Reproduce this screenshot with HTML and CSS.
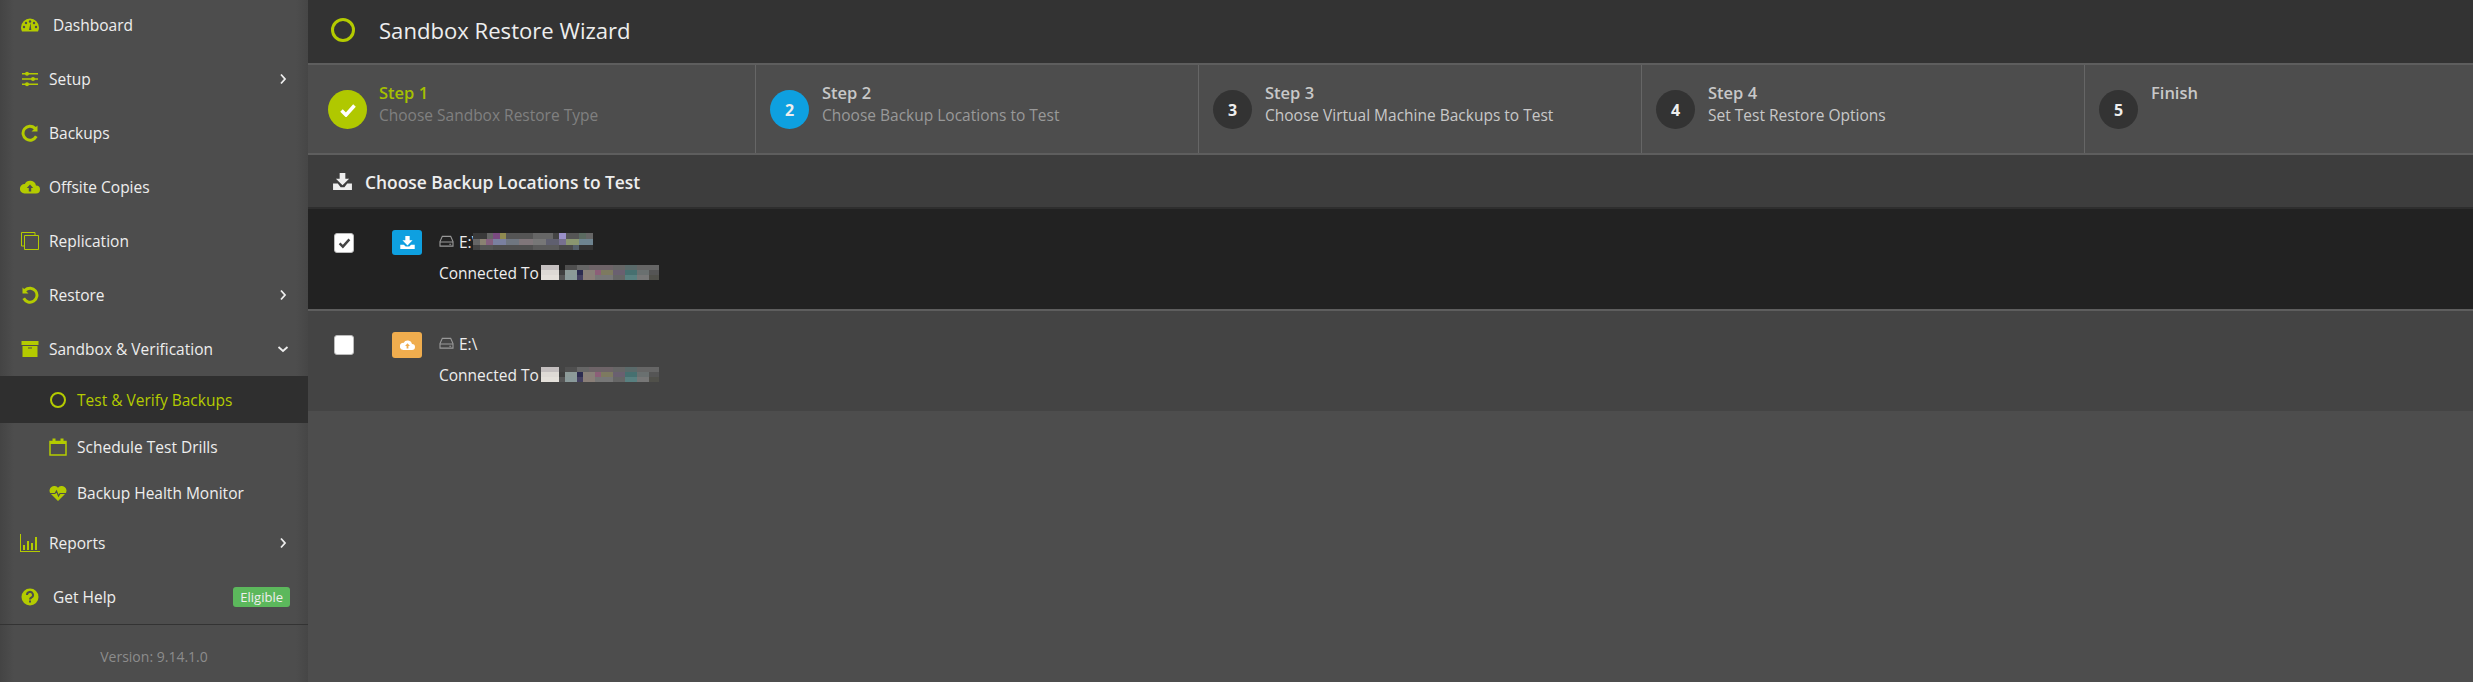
FILE: index.html
```html
<!DOCTYPE html>
<html lang="en">
<head>
<meta charset="utf-8">
<title>Sandbox Restore Wizard</title>
<link rel="stylesheet" href="styles.css">
</head>
<body>
<div class="app">
  <aside class="sidebar">
    <nav class="nav">
      <a class="item first wide"><svg class="ico" viewBox="0 0 18 18"><path d="M9 2.500A9 9 0 0 0 0 11.500c0 1.500.4 2.800 1 4h16c.6-1.200 1-2.500 1-4a9 9 0 0 0-9-9z"/><g fill="#4d4d4d"><circle cx="3" cy="11" r="1.200"/><circle cx="5" cy="7" r="1.200"/><circle cx="9" cy="5.500" r="1.200"/><circle cx="13" cy="7" r="1.200"/><circle cx="15" cy="11" r="1.200"/><path d="M8 14l1.500-7 .8 7z"/></g></svg><span>Dashboard</span></a>
      <a class="item"><svg class="ico" viewBox="0 0 18 18"><path d="M1 3h16v1.400H1zM1 8.300h16v1.400H1zM1 13.600h16V15H1z"/><circle cx="6" cy="3.700" r="2"/><circle cx="12" cy="9" r="2"/><circle cx="6" cy="14.300" r="2"/></svg><span>Setup</span><svg class="chev" viewBox="0 0 8 12"><path d="M2 1.500L6 6l-4 4.500"/></svg></a>
      <a class="item"><svg class="ico" viewBox="0 0 18 18"><path d="M16.500 1.500v6h-6l2.300-2.300A5.500 5.500 0 1 0 14 11.500l2.600 1.600A8.500 8.500 0 1 1 14.900 3z"/></svg><span>Backups</span></a>
      <a class="item"><svg class="ico big" viewBox="0 0 20 18"><path d="M16 7.500A6 6 0 0 0 4.800 6 4.700 4.700 0 0 0 4.500 15.500H16a4 4 0 0 0 0-8z"/><path fill="#4d4d4d" d="M10 6.500l3.200 3.500h-2v3.500H8.800V10h-2z"/></svg><span>Offsite Copies</span></a>
      <a class="item"><svg class="ico" viewBox="0 0 18 18"><g fill="none" stroke="#b4cb00"><path d="M3.500 14H.5V.5H14v3"/><path d="M3.500 3.500h14v14h-14z"/></g></svg><span>Replication</span></a>
      <a class="item"><svg class="ico" viewBox="0 0 18 18"><path transform="matrix(-1 0 0 1 18 0)" d="M16.500 1.500v6h-6l2.300-2.300A5.500 5.500 0 1 0 14 11.500l2.600 1.600A8.500 8.500 0 1 1 14.900 3z"/></svg><span>Restore</span><svg class="chev" viewBox="0 0 8 12"><path d="M2 1.500L6 6l-4 4.500"/></svg></a>
      <a class="item"><svg class="ico" viewBox="0 0 18 18"><path d="M.5 1h17v4H.5zM1.500 6h15v11h-15z"/><path fill="#4d4d4d" d="M7 7.500h4v1H7z"/></svg><span>Sandbox &amp; Verification</span><svg class="chev down" viewBox="0 0 12 8"><path d="M1.500 2L6 6l4.500-4"/></svg></a>
      <a class="sub active"><span class="ring-s"></span><span>Test &amp; Verify Backups</span></a>
      <a class="sub"><svg class="ico" viewBox="0 0 18 18"><path fill="none" stroke="#b4cb00" stroke-width="1.500" d="M1 3.500h16v13.500H1z"/><path d="M1 3h16v3H1zM3.500.5h3v3.500h-3zM11.500.5h3v3.500h-3z"/></svg><span>Schedule Test Drills</span></a>
      <a class="sub short"><svg class="ico" viewBox="0 0 18 18"><path d="M9 17L1.500 9.500A4.700 4.700 0 0 1 9 3.800a4.700 4.700 0 0 1 7.500 5.700z"/><path fill="none" stroke="#4d4d4d" stroke-width="1.200" d="M0 9.500h6l1.500-2.500 2 5 1.500-2.500h7"/></svg><span>Backup Health Monitor</span></a>
      <a class="item"><svg class="ico big" viewBox="0 0 20 18"><path d="M0 0h1v17h19v1H0zM3 11h2v5H3zM7 7h2v9H7zM11 9h2v7h-2zM15 3h2v13h-2z"/></svg><span>Reports</span><svg class="chev" viewBox="0 0 8 12"><path d="M2 1.500L6 6l-4 4.500"/></svg></a>
      <a class="item wide"><svg class="ico" viewBox="0 0 18 18"><circle cx="9" cy="9" r="8.500"/><path fill="none" stroke="#4d4d4d" stroke-width="2" d="M6 7a3 3 0 1 1 4.500 2.500C9.500 10 9 10.500 9 11.500"/><path fill="#4d4d4d" d="M8 12.500h2v2H8z"/></svg><span>Get Help</span><em class="pill">Eligible</em></a>
    </nav>
    <footer class="version">Version: 9.14.1.0</footer>
  </aside>
  <main class="main">
    <header class="head"><span class="ring"></span><h1>Sandbox Restore Wizard</h1></header>
    <ol class="steps">
      <li class="step done"><span class="num"><svg class="tick" viewBox="0 0 16 14"><path d="M1.500 7.500L6 12 14.500 2.500"/></svg></span><div><b>Step 1</b><small>Choose Sandbox Restore Type</small></div></li>
      <li class="step now"><span class="num">2</span><div><b>Step 2</b><small>Choose Backup Locations to Test</small></div></li>
      <li class="step"><span class="num">3</span><div><b>Step 3</b><small>Choose Virtual Machine Backups to Test</small></div></li>
      <li class="step"><span class="num">4</span><div><b>Step 4</b><small>Set Test Restore Options</small></div></li>
      <li class="step"><span class="num">5</span><div><b>Finish</b></div></li>
    </ol>
    <h2 class="section"><svg class="sec-ico" viewBox="0 0 20 18"><path d="M7 0h6v6h4l-7 7-7-7h4z"/><path d="M0 11h5l3 4h4l3-4h5v7H0z"/></svg>Choose Backup Locations to Test</h2>
    <section class="row on">
      <span class="check"><svg viewBox="0 0 16 14"><path d="M2 7.500L6 11.500 14 2.500"/></svg></span>
      <span class="badge blue"><svg viewBox="0 0 20 18"><path d="M7 0h6v6h4l-7 7-7-7h4z"/><path d="M0 12h5l2.500 2.500h5L15 12h5v6H0z"/></svg></span>
      <div class="info">
        <p class="path"><svg class="drive" viewBox="0 0 16 14"><path d="M3.500 1.500h9L15 7v5H1V7z"/><path d="M1 7.500h14M11 10h2"/></svg>E:\<span class="mosaic m-path"></span></p>
        <p class="conn">Connected To<span class="mosaic m-host"></span></p>
      </div>
    </section>
    <section class="row off">
      <span class="check"></span>
      <span class="badge orange"><svg viewBox="0 0 20 16"><path d="M16 6A6 6 0 0 0 4.800 4.500 4.700 4.700 0 0 0 4.500 14H16a4 4 0 0 0 0-8z"/><path fill="#f0ad4e" d="M10 5l3.200 3.500h-2V12H8.800V8.500h-2z"/></svg></span>
      <div class="info">
        <p class="path"><svg class="drive" viewBox="0 0 16 14"><path d="M3.500 1.500h9L15 7v5H1V7z"/><path d="M1 7.500h14M11 10h2"/></svg>E:\</p>
        <p class="conn">Connected To<span class="mosaic m-host"></span></p>
      </div>
    </section>
  </main>
</div>
</body>
</html>
```
FILE: styles.css
```css
* { box-sizing: border-box; }
html, body { margin: 0; height: 100%; overflow: hidden; }
body { font-family: "Open Sans", "Noto Sans", sans-serif; background: #4d4d4d; color: #eee; }
.app { display: flex; height: 682px; }

.sidebar {
  width: 308px; flex: none; display: flex; flex-direction: column;
  background: linear-gradient(90deg, #444 0, #4d4d4d 14px, #4d4d4d 296px, #464646 308px);
}
.nav { display: flex; flex-direction: column; height: 625px; border-bottom: 1px solid #333; }
.item, .sub { display: flex; align-items: center; font-size: 15.5px; color: #eee; }
.item { height: 54px; padding: 0 21px; gap: 10px; }
.item.first { height: 52px; padding-bottom: 2px; }
.item.wide { gap: 14px; }
.sub { height: 47px; padding-left: 49px; gap: 10px; }
.sub.short { height: 46px; }
.active { background: #2f2f2f; color: #b4cb00; }
.ico { width: 18px; height: 18px; flex: none; fill: #b4cb00; }
.ico.big { width: 20px; margin-left: -1px; margin-right: -1px; }
.chev { width: 8px; height: 12px; margin-left: auto; margin-right: 0; fill: none; stroke: #eee; stroke-width: 1.800; }
.chev.down { width: 12px; height: 8px; margin-right: -2px; }
.ring-s { width: 16px; height: 16px; margin: 0 1px; border: 2.500px solid #b4cb00; border-radius: 50%; flex: none; }
.pill { margin-left: auto; margin-right: -3px; height: 20px; padding: 0 7px; background: #5cb85c; border-radius: 3px; color: #eee; font-size: 13px; font-style: normal; line-height: 20px; }
.version { padding-top: 22px; text-align: center; font-size: 14px; color: #8c8c8c; }

.main { flex: 1; min-width: 0; }
.head { height: 65px; display: flex; align-items: center; padding-left: 23px; gap: 24px; background: #333; border-bottom: 2px solid #5e5e5e; }
.ring { width: 24px; height: 24px; border: 3px solid #b4cb00; border-radius: 50%; margin-top: -4px; }
.head h1 { margin: -4px 0 0; font-size: 22.100px; font-weight: 400; color: #eee; }

.steps { display: grid; grid-template-columns: 448px 443px 443px 443px 1fr; height: 90px; margin: 0; padding: 0; list-style: none; background: #4d4d4d; border-bottom: 2px solid #5e5e5e; }
.step { display: flex; align-items: flex-start; gap: 13px; padding: 25px 14px 0; border-right: 1px solid #666; color: #c8c8c8; }
.step:first-child { padding-left: 20px; gap: 12px; }
.step:last-child { border-right: 0; }
.num { width: 39px; height: 39px; flex: none; display: flex; align-items: center; justify-content: center; border-radius: 50%; background: #333; color: #eee; font-size: 16px; font-weight: 700; }
.step b { display: block; margin-top: -8px; font-size: 16.500px; font-weight: 600; line-height: 22px; }
.step small { display: block; font-size: 15.500px; line-height: 22px; }
.done b { color: #a6c000; }
.done small { color: #808080; }
.done .num { background: #b0c800; }
.now small { color: #999; }
.now .num { background: #0ea0e0; }
.tick { width: 16px; height: 14px; fill: none; stroke: #fff; stroke-width: 3.500; }

.section { display: flex; align-items: center; gap: 13px; height: 54px; margin: 0; padding: 1px 0 0 25px; background: #3d3d3d; border-bottom: 2px solid #2e2e2e; font-size: 17.400px; font-weight: 600; color: #eee; }
.sec-ico { width: 19px; height: 17px; fill: #eee; }

.row { display: flex; align-items: flex-start; height: 102px; border-bottom: 2px solid #5e5e5e; padding: 21px 0 0 26px; }
.row.on { background: #222; }
.row.off { background: #444; border-bottom: 0; height: 100px; }
.check { width: 20px; height: 20px; margin-top: 3px; flex: none; background: #fff; border: 1px solid #bbb; border-radius: 3px; display: flex; align-items: center; justify-content: center; }
.check svg { width: 13px; height: 12px; fill: none; stroke: #444; stroke-width: 3; }
.badge { width: 30px; height: 25px; margin-left: 38px; border-radius: 3px; flex: none; display: flex; align-items: center; justify-content: center; }
.badge svg { width: 15px; height: 13px; fill: #fff; }
.blue { background: #0ea0e0; }
.orange { background: #f0ad4e; height: 26px; }
.info { margin-left: 17px; }
.info p { display: flex; align-items: center; margin: 0; height: 31px; font-size: 15.500px; color: #eee; }
.info .path { margin-top: -4px; }
.drive { width: 15px; height: 13px; margin-right: 5px; fill: none; stroke: #999; stroke-width: 1.200; }

.mosaic { display: block; background-repeat: no-repeat; }
.m-path {
  width: 120px; height: 17px; margin-left: -4px;
  background-size: 100% 6px;
  background-position: 0 0, 0 6px, 0 12px;
  background-image:
    linear-gradient(90deg, #3a3a3a 0 14px, #666 14px 20px, #7a4a80 20px 27px, #8f8a50 27px 33px, #555 33px 60px, #666 60px 80px, #444 80px 86px, #9a90c8 86px 93px, #555 93px 106px, #5a6a60 106px 113px, #666 113px 120px),
    linear-gradient(90deg, #666 0 7px, #8a8272 7px 13px, #85607f 13px 20px, #7a80a0 20px 33px, #6f7680 33px 46px, #80767a 46px 60px, #777 60px 73px, #5f5f6f 73px 86px, #777090 86px 93px, #8a9670 93px 106px, #6e8490 106px 120px),
    linear-gradient(90deg, #444 0 7px, #555 7px 20px, #4f4f4f 20px 60px, #5a5a5a 60px 86px, #4a4a4a 86px 100px, #55606a 100px 106px, #333 106px 120px);
}
.m-host {
  width: 118px; height: 15px; margin-left: 2px;
  background-size: 100% 5px;
  background-position: 0 0, 0 5px, 0 10px;
  background-image:
    linear-gradient(90deg, #c4bfbf 0 18px, transparent 18px 24px, #4f4f4f 24px 36px, #666 36px 48px, #6e6468 48px 72px, #666 72px 84px, #5a6a6a 84px 96px, #666 96px 118px),
    linear-gradient(90deg, #dedad5 0 18px, #3f3f3f 18px 24px, #8c9a98 24px 36px, #2c2c50 36px 42px, #888078 42px 54px, #8c5f78 54px 60px, #7d7a60 60px 72px, #6a6070 72px 84px, #467070 84px 96px, #6a7070 96px 108px, #555 108px 118px),
    linear-gradient(90deg, #e4e0da 0 18px, #555 18px 24px, #8a9a9a 24px 36px, #444060 36px 42px, #8a7f78 42px 54px, #777 54px 72px, #666 72px 84px, #588080 84px 96px, #777 96px 108px, #50504a 108px 118px);
}
```
